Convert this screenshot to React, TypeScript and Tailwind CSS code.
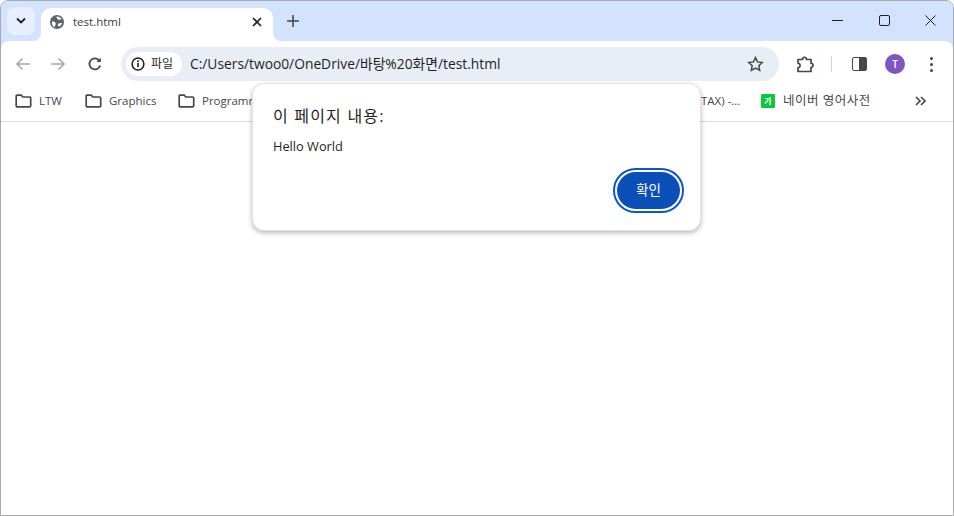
import React from "react";

const Folder = () => (
  <svg width="17" height="14" viewBox="0 0 17 14" fill="none" stroke="#474747" strokeWidth="1.7" className="shrink-0">
    <path d="M1.2 2.2c0-.6.4-1 1-1h4l1.6 1.8h6.9c.6 0 1 .4 1 1v7.8c0 .6-.4 1-1 1H2.2c-.6 0-1-.4-1-1z" />
  </svg>
);

function Bookmark({ label, className }: { label: string; className: string }) {
  return (
    <div className={"flex items-center gap-[7px] shrink-0 " + className}>
      <Folder />
      <span className="text-[11.5px] text-[#474747] whitespace-nowrap">{label}</span>
    </div>
  );
}

export default function App() {
  return (
    <div className="relative w-[954px] h-[516px] overflow-hidden bg-white border border-[#a9a9a9] rounded-t-[8px] font-['Open_Sans','Noto_Sans_CJK_KR',sans-serif] flex flex-col">
      {/* tab strip */}
      <div className="h-[40px] shrink-0 bg-[#d3e3fd] flex items-start">
        <div className="ml-[6px] mt-[6px] w-[28px] h-[28px] rounded-[8px] bg-[#e7effd] flex items-center justify-center">
          <svg width="12" height="8" viewBox="0 0 12 8" fill="none" stroke="#1f1f1f" strokeWidth="1.8"><path d="M2 1.5l4 4 4-4" /></svg>
        </div>
        <div className="relative ml-[6px] mt-[7px] w-[232px] h-[33px] bg-white rounded-t-[10px] flex items-center pl-[9px] pr-[11px] pb-[5px]">
          <svg className="absolute left-[-8px] bottom-0" width="8" height="8" viewBox="0 0 8 8"><path d="M8 0v8H0a8 8 0 0 0 8-8z" fill="#fff" /></svg>
          <svg className="absolute right-[-8px] bottom-0" width="8" height="8" viewBox="0 0 8 8"><path d="M0 0v8h8a8 8 0 0 1-8-8z" fill="#fff" /></svg>
          <svg width="14" height="14" viewBox="0 0 14 14" className="shrink-0">
            <circle cx="7" cy="7" r="7" fill="#5f6368" />
            <path d="M6.500 1.500C8.500 1.300 10.500 2.300 11.700 4c-1.200.8-3 .8-4 .3-.8-.7-1.200-1.700-1.200-2.800zM2 6.500c1.500-.3 2.800.3 3.500 1.300.5 1 .2 2-.4 2.700-.5.800-.7 1.300-.7 1.700C2.800 11.500 1.500 9 2 6.500zM8 9c1-.8 2.500-1.100 4-1-.4 1.700-1.500 3-3 3.700-.7-.7-1.300-1.800-1-2.700z" fill="#fff" />
          </svg>
          <span className="ml-[9px] text-[11.5px] text-[#3c3c3c] whitespace-nowrap">test.html</span>
          <svg className="ml-auto" width="10" height="10" viewBox="0 0 10 10" stroke="#1f1f1f" strokeWidth="1.7"><path d="M1 1l8 8M9 1l-8 8" /></svg>
        </div>
        <svg className="ml-[14px] mt-[14px]" width="12" height="12" viewBox="0 0 12 12" stroke="#474747" strokeWidth="1.6"><path d="M6 0v12M0 6h12" /></svg>
        <div className="ml-auto flex items-center mt-[14px]">
          <svg className="mr-[36px]" width="11" height="11" viewBox="0 0 11 11" stroke="#1f1f1f" strokeWidth="1"><path d="M0 5.500h11" /></svg>
          <svg className="mr-[35px]" width="11" height="11" viewBox="0 0 11 11" fill="none" stroke="#1f1f1f" strokeWidth="1"><rect x=".5" y=".5" width="10" height="10" rx="1.500" /></svg>
          <svg className="mr-[17px]" width="11" height="11" viewBox="0 0 11 11" stroke="#1f1f1f" strokeWidth="1"><path d="M.5.500l10 10M10.500.500l-10 10" /></svg>
        </div>
      </div>
      {/* toolbar */}
      <div className="h-[46px] shrink-0 bg-[#d3e3fd]">
        <div className="h-full bg-white rounded-t-[8px] flex items-center">
          <svg className="ml-[14px]" width="15" height="14" viewBox="0 0 15 14" fill="none" stroke="#a8a8a8" strokeWidth="1.600"><path d="M15 7H2M7.500 1.500L2 7l5.500 5.500" /></svg>
          <svg className="ml-[21px]" width="15" height="14" viewBox="0 0 15 14" fill="none" stroke="#a8a8a8" strokeWidth="1.600"><path d="M0 7h13M7.500 1.500L13 7l-5.500 5.500" /></svg>
          <svg className="ml-[22px]" width="14" height="14" viewBox="0 0 14 14" fill="none" stroke="#474747" strokeWidth="1.800"><path d="M12.200 8.500A5.500 5.500 0 1 1 11 3.200" /><path d="M12.800.800v4.300H8.500z" fill="#474747" stroke="none" /></svg>
          <div className="ml-[19px] w-[658px] h-[34px] rounded-full bg-[#e9edf6] flex items-center pl-[5px] shrink-0">
            <div className="h-[24px] w-[56px] bg-white rounded-full flex items-center pl-[5px]">
              <svg width="14" height="14" viewBox="0 0 14 14" fill="none"><circle cx="7" cy="7" r="5.900" stroke="#1f1f1f" strokeWidth="1.500" /><path d="M7 6v4.200" stroke="#1f1f1f" strokeWidth="1.600" /><circle cx="7" cy="4.200" r="1" fill="#1f1f1f" /></svg>
              <span className="ml-[6px] text-[12px] text-[#1f1f1f]">파일</span>
            </div>
            <span className="ml-[8px] text-[13.8px] text-[#1f1f1f] whitespace-nowrap">C:/Users/twoo0/OneDrive/바탕%20화면/test.html</span>
            <svg className="ml-auto mr-[15px]" width="17" height="16" viewBox="0 0 17 16" fill="none" stroke="#474747" strokeWidth="1.500"><path d="M8.500 1.600l2.050 4.300 4.700.6-3.450 3.250.9 4.650-4.200-2.300-4.200 2.300.9-4.650L1.750 6.500l4.700-.6z" /></svg>
          </div>
          <svg className="ml-[18px]" width="18" height="17" viewBox="0 0 18 17" fill="none" stroke="#474747" strokeWidth="1.700" strokeLinejoin="round"><path d="M1 3.500h4.500c-.3-3 4.300-3 4 0H14v3.800c2.700-.4 2.700 4.400 0 4V15.500H1v-3.800c2.800.2 2.800-4.600 0-4.400z" /></svg>
          <div className="ml-[16px] w-px h-[16px] bg-[#c4d7f5]" />
          <div className="ml-[20px] w-[15px] h-[14px] border-[1.500px] border-[#474747] rounded-[2px] flex justify-end"><div className="w-[7px] h-full bg-[#474747]" /></div>
          <div className="ml-[18px] w-[20px] h-[20px] rounded-full bg-[#7e57c2] text-white text-[10px] font-semibold flex items-center justify-center">T</div>
          <div className="ml-[25px] flex flex-col gap-[3px]">
            <div className="w-[3px] h-[3px] rounded-full bg-[#474747]" />
            <div className="w-[3px] h-[3px] rounded-full bg-[#474747]" />
            <div className="w-[3px] h-[3px] rounded-full bg-[#474747]" />
          </div>
        </div>
      </div>
      {/* bookmarks */}
      <div className="h-[35px] shrink-0 bg-white border-b border-[#dcdcdc] flex items-center pb-[6px]">
        <Bookmark label="LTW" className="ml-[14px] w-[70px]" />
        <Bookmark label="Graphics" className="w-[93px]" />
        <Bookmark label="Programming" className="w-[150px]" />
        <span className="ml-[373px] text-[11.5px] text-[#474747] whitespace-nowrap w-[70px]">TAX) -...</span>
        <div className="ml-[-10px] w-[14px] h-[14px] bg-[#0bc73e] rounded-[1px] flex items-center justify-center text-white text-[8px] font-bold shrink-0">가</div>
        <span className="ml-[8px] text-[12.5px] tracking-[0.5px] text-[#474747] whitespace-nowrap">네이버 영어사전</span>
        <svg className="ml-[44px]" width="11" height="10" viewBox="0 0 11 10" fill="none" stroke="#474747" strokeWidth="1.700"><path d="M1 1l4 4-4 4M6 1l4 4-4 4" /></svg>
      </div>
      <div className="flex-1 bg-white" />
      {/* dialog */}
      <div className="absolute left-[251px] top-[82px] w-[449px] h-[148px] bg-white rounded-[12px] border border-[#e3e3e3] shadow-[0_2px_5px_rgba(0,0,0,0.28)] pl-[20px] pr-[16px] pt-[21px] flex flex-col">
        <div className="text-[16px] tracking-[1.2px] leading-[22px] text-[#1f1f1f]">이 페이지 내용:</div>
        <div className="mt-[10px] text-[12.8px] leading-[18px] text-[#1f1f1f]">Hello World</div>
        <div className="mt-[13px] self-end w-[71px] h-[45px] rounded-full border-2 border-[#0b57d0] p-[2px]">
          <div className="w-full h-full rounded-full bg-[#0b4fb8] text-white text-[13.5px] flex items-center justify-center">확인</div>
        </div>
      </div>
    </div>
  );
}
